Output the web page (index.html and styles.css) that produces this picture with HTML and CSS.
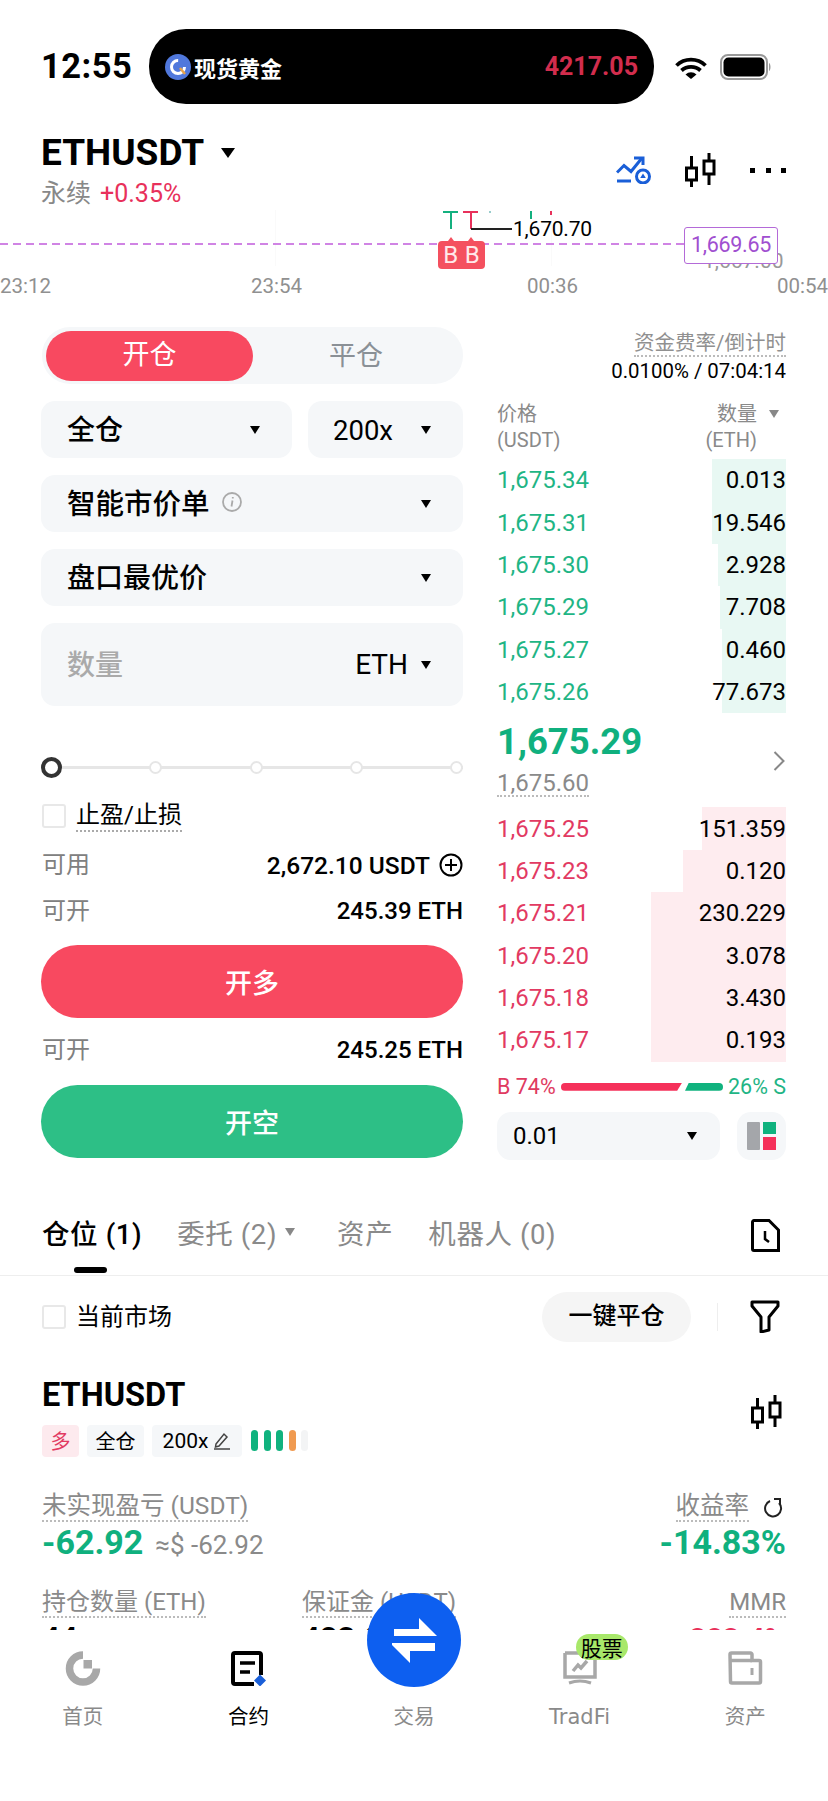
FILE: index.html
```html
<!DOCTYPE html>
<html lang="zh-CN">
<head>
  <meta charset="UTF-8">
  <meta name="viewport" content="width=device-width, initial-scale=1.0">
  <title>ETHUSDT</title>
  <link rel="stylesheet" href="styles.css">
</head>
<body>
  <div class="app">
    <div class="content">
      <!-- status bar -->
      <div class="status">
        <span class="time">12:55</span>
        <div class="island">
          <svg class="island-logo" width="26" height="28" viewBox="0 0 26 28"><circle cx="13" cy="14" r="13" fill="#5078dc"/><circle cx="13" cy="14" r="6.500" fill="none" stroke="#fff" stroke-width="3" stroke-dasharray="30 11"/><path d="M15 15l5 6" stroke="#e8a34a" stroke-width="2.500"/></svg>
          <span class="island-name">现货黄金</span>
          <span class="island-price">4217.05</span>
        </div>
        <svg class="wifi" width="32" height="22" viewBox="0 0 32 22"><path d="M1.500 8.500a21 21 0 0 1 29 0M6.500 13.500a14 14 0 0 1 19 0" fill="none" stroke="#000" stroke-width="3.800"/><path d="M10.500 17.500a8 8 0 0 1 11 0l-5.500 4.500z" fill="#000"/></svg>
        <svg class="battery" width="51" height="26" viewBox="0 0 51 26"><rect x="1" y="1" width="46" height="24" rx="7" fill="#fff" stroke="#999" stroke-width="2"/><rect x="3.500" y="3.500" width="41" height="19" rx="5" fill="#000"/><path d="M49 9c2 1 2 7 0 8z" fill="#999"/></svg>
      </div>

      <!-- symbol header -->
      <div class="header">
        <div>
          <div class="symbol"><span>ETHUSDT</span><i class="caret caret-lg"></i></div>
          <div class="sub"><span class="perp">永续</span><span class="change">+0.35%</span></div>
        </div>
        <div class="header-icons">
          <svg width="36" height="28" viewBox="0 0 36 28" fill="none" stroke="#1a5fd8" stroke-width="3"><path d="M1 16.500l7-7 7 6 11-13.500"/><path d="M18 2h9v7"/><path d="M1 25h14"/><circle cx="27" cy="20.500" r="6.500"/><path d="M27 17.500l2.800 4.500h-5.600z" fill="#1a5fd8" stroke="none"/></svg>
          <svg class="candle-icon" width="31" height="34" viewBox="0 0 31 34" fill="none" stroke="#000" stroke-width="3"><rect x="1.500" y="15" width="10" height="12"/><path d="M6.500 3v12M6.500 27v7"/><rect x="19" y="8" width="10" height="13"/><path d="M24 0v8M24 21v11"/></svg>
          <div class="more"><i></i><i></i><i></i></div>
        </div>
      </div>

      <!-- chart strip -->
      <div class="chart">
        <i class="grid-line grid-a"></i>
        <i class="grid-line grid-b"></i>
        <i class="wick wick-green"></i>
        <i class="wick wick-red"></i>
        <i class="tick tick-a"></i>
        <i class="tick tick-b"></i>
        <i class="tick tick-c"></i>
        <i class="leader"></i>
        <span class="peak">1,670.70</span>
        <i class="last-line"></i>
        <div class="marks"><span>B</span><span>B</span></div>
        <span class="ghost-price">1,667.00</span>
        <span class="last-tag">1,669.65</span>
        <span class="axis axis-a">23:12</span>
        <span class="axis axis-b">23:54</span>
        <span class="axis axis-c">00:36</span>
        <span class="axis axis-d">00:54</span>
      </div>

      <!-- order form and book -->
      <div class="trade">
        <div class="form">
          <div class="segment">
            <span class="segment-on">开仓</span>
            <span class="segment-off">平仓</span>
          </div>
          <div class="field-row">
            <div class="field field-mode"><span>全仓</span><i class="caret"></i></div>
            <div class="field field-lev"><span>200x</span><i class="caret"></i></div>
          </div>
          <div class="field">
            <span class="with-info">智能市价单
              <svg width="20" height="20" viewBox="0 0 20 20" fill="none" stroke="#aaa" stroke-width="1.800"><circle cx="10" cy="10" r="9"/><path d="M10.500 8.500l-1 6M10.800 5v1.500"/></svg>
            </span>
            <i class="caret"></i>
          </div>
          <div class="field"><span>盘口最优价</span><i class="caret"></i></div>
          <div class="field field-qty">
            <span class="placeholder">数量</span>
            <span class="unit">ETH<i class="caret"></i></span>
          </div>

          <div class="slider">
            <i class="slider-handle"></i>
            <i class="slider-dot"></i>
            <i class="slider-dot"></i>
            <i class="slider-dot"></i>
            <i class="slider-dot"></i>
          </div>

          <div class="tpsl"><i class="checkbox"></i><span class="dotted">止盈/止损</span></div>

          <div class="info info-avail">
            <span class="info-label">可用</span>
            <span class="info-value">2,672.10 USDT
              <svg width="24" height="24" viewBox="0 0 24 24" fill="none" stroke="#000" stroke-width="2"><circle cx="12" cy="12" r="10.500"/><path d="M6 12h12M12 6v12"/></svg>
            </span>
          </div>
          <div class="info info-open">
            <span class="info-label">可开</span>
            <span class="info-value">245.39 ETH</span>
          </div>
          <div class="btn btn-long">开多</div>
          <div class="info info-open-short">
            <span class="info-label">可开</span>
            <span class="info-value">245.25 ETH</span>
          </div>
          <div class="btn btn-short">开空</div>
        </div>

        <div class="book">
          <div class="funding">
            <span class="funding-label dotted-gray">资金费率/倒计时</span>
            <span class="funding-value">0.0100% / 07:04:14</span>
          </div>
          <div class="book-head">
            <div><div>价格</div><div class="book-unit">(USDT)</div></div>
            <div class="book-head-right"><div>数量<i class="caret caret-gray"></i></div><div class="book-unit">(ETH)</div></div>
          </div>

          <div class="rows">
            <div class="row bid"><i class="depth" style="width:74px"></i><span class="price">1,675.34</span><span class="qty">0.013</span></div>
            <div class="row bid"><i class="depth" style="width:74px"></i><span class="price">1,675.31</span><span class="qty">19.546</span></div>
            <div class="row bid"><i class="depth" style="width:68px"></i><span class="price">1,675.30</span><span class="qty">2.928</span></div>
            <div class="row bid"><i class="depth" style="width:66px"></i><span class="price">1,675.29</span><span class="qty">7.708</span></div>
            <div class="row bid"><i class="depth" style="width:64px"></i><span class="price">1,675.27</span><span class="qty">0.460</span></div>
            <div class="row bid"><i class="depth" style="width:64px"></i><span class="price">1,675.26</span><span class="qty">77.673</span></div>
          </div>

          <div class="mid">
            <div>
              <div class="mid-price">1,675.29</div>
              <span class="mid-mark dotted-gray">1,675.60</span>
            </div>
            <svg class="chevron" width="12" height="22" viewBox="0 0 12 22" fill="none" stroke="#888" stroke-width="2"><path d="M1.500 2l9 9-9 9"/></svg>
          </div>

          <div class="rows">
            <div class="row ask"><i class="depth" style="width:84px"></i><span class="price">1,675.25</span><span class="qty">151.359</span></div>
            <div class="row ask"><i class="depth" style="width:103px"></i><span class="price">1,675.23</span><span class="qty">0.120</span></div>
            <div class="row ask"><i class="depth" style="width:135px"></i><span class="price">1,675.21</span><span class="qty">230.229</span></div>
            <div class="row ask"><i class="depth" style="width:135px"></i><span class="price">1,675.20</span><span class="qty">3.078</span></div>
            <div class="row ask"><i class="depth" style="width:135px"></i><span class="price">1,675.18</span><span class="qty">3.430</span></div>
            <div class="row ask"><i class="depth" style="width:135px"></i><span class="price">1,675.17</span><span class="qty">0.193</span></div>
          </div>

          <div class="ratio">
            <span class="ratio-b">B 74%</span>
            <i class="ratio-red"></i>
            <i class="ratio-green"></i>
            <span class="ratio-s">26% S</span>
          </div>

          <div class="book-foot">
            <div class="step"><span>0.01</span><i class="caret"></i></div>
            <div class="layout-btn">
              <i class="lay-gray"></i>
              <div class="lay-stack"><i class="lay-green"></i><i class="lay-red"></i></div>
            </div>
          </div>
        </div>
      </div>

      <!-- positions -->
      <div class="tabs">
        <span class="tab tab-on">仓位 (1)</span>
        <span class="tab tab-orders">委托 (2)<i class="caret caret-gray"></i></span>
        <span class="tab tab-assets">资产</span>
        <span class="tab">机器人 (0)</span>
        <svg class="tabs-icon" width="29" height="33" viewBox="0 0 29 33" fill="none" stroke="#000" stroke-width="3"><path d="M3 1.500h15l9.500 9.500v20.500h-24.500a1.500 1.500 0 0 1-1.500-1.500v-27a1.500 1.500 0 0 1 1.500-1.500z"/><path d="M14 12v8l4 3" stroke-width="2.500"/></svg>
      </div>

      <div class="filter">
        <i class="checkbox"></i>
        <span class="filter-label">当前市场</span>
        <span class="close-all">一键平仓</span>
        <i class="filter-sep"></i>
        <svg width="30" height="33" viewBox="0 0 30 33" fill="none" stroke="#000" stroke-width="3"><path d="M2 2h26v4l-9 11v13l-8 2v-15l-9-11z" stroke-linejoin="round"/></svg>
      </div>

      <div class="pos-head">
        <div>
          <div class="pos-symbol">ETHUSDT</div>
          <div class="tags">
            <span class="tag tag-long">多</span>
            <span class="tag tag-mode">全仓</span>
            <span class="tag tag-lev">200x
              <svg width="18" height="18" viewBox="0 0 18 18" fill="none" stroke="#444" stroke-width="1.500"><path d="M3 12l8-10 3 3-8 9-3.500 1zM1 17h16"/></svg>
            </span>
            <div class="adl"><i class="adl-on"></i><i class="adl-on"></i><i class="adl-on"></i><i class="adl-warn"></i><i class="adl-off"></i></div>
          </div>
        </div>
        <svg class="pos-candle" width="31" height="34" viewBox="0 0 31 34" fill="none" stroke="#000" stroke-width="3"><rect x="1.500" y="13" width="10" height="14"/><path d="M6.500 3v10M6.500 27v7"/><rect x="19" y="8" width="10" height="14"/><path d="M24 0v8M24 22v10"/></svg>
      </div>

      <div class="pnl-labels">
        <span class="metric-label dotted-gray">未实现盈亏 (USDT)</span>
        <span class="roe-label">
          <span class="metric-label dotted-gray">收益率</span>
          <svg width="20" height="22" viewBox="0 0 20 22" fill="none" stroke="#222" stroke-width="2"><path d="M7 5a8 8 0 1 0 9 2"/><path d="M11 3h6v6"/></svg>
        </span>
      </div>
      <div class="pnl-values">
        <span class="pnl-main">-62.92<span class="pnl-usd">≈$ -62.92</span></span>
        <span class="pnl-main">-14.83%</span>
      </div>
      <div class="metrics">
        <span class="metric-label dotted-gray metric-a">持仓数量 (ETH)</span>
        <span class="metric-label dotted-gray metric-b">保证金 (USDT)</span>
        <span class="metric-label dotted-gray metric-c">MMR</span>
        <span class="metric-value">44</span>
        <span class="metric-value">423.98</span>
        <span class="metric-value metric-mmr">383.4%</span>
      </div>
    </div>

    <!-- tab bar -->
    <div class="nav">
      <div class="swap">
        <svg width="46" height="46" viewBox="0 0 46 46" fill="#fff"><path d="M3 12h25V1l18 18H3z"/><path d="M1 26h43v8H19v12L1 28z"/></svg>
      </div>
      <div class="nav-item">
        <svg width="36" height="35" viewBox="0 0 36 35"><path d="M18 4a13.500 13.500 0 1 0 13.500 13.500" fill="none" stroke="#a8a8a8" stroke-width="7.500"/><rect x="18.500" y="9" width="8.500" height="8.500" fill="#a8a8a8"/></svg>
        <span>首页</span>
      </div>
      <div class="nav-item nav-on">
        <svg width="36" height="35" viewBox="0 0 36 35"><path d="M31 24V4a2 2 0 0 0-2-2H5a2 2 0 0 0-2 2v27a2 2 0 0 0 2 2h19" fill="none" stroke="#000" stroke-width="4"/><path d="M10 12h15M10 21h10" stroke="#000" stroke-width="3.500"/><path d="M30 23.500l6 6-6 6-6-6z" fill="#1a5fd8"/></svg>
        <span>合约</span>
      </div>
      <div class="nav-item nav-trade">
        <span>交易</span>
      </div>
      <div class="nav-item nav-tradfi">
        <span class="badge">股票</span>
        <svg width="36" height="35" viewBox="0 0 36 35" fill="none" stroke="#a8a8a8" stroke-width="3.500"><path d="M3 2v24h30v-24h-30"/><path d="M11 20l5-6 3 3 6-7" stroke-width="3.500"/><path d="M7 32q11-4 22 0" stroke-width="3"/></svg>
        <span>TradFi</span>
      </div>
      <div class="nav-item">
        <svg width="36" height="35" viewBox="0 0 36 35" fill="none" stroke="#a8a8a8" stroke-width="3.500"><path d="M3 3.500a1.500 1.500 0 0 1 1.500-1.500h19a1.500 1.500 0 0 1 1.500 1.500v6h7a1.500 1.500 0 0 1 1.500 1.500v19.500a1.500 1.500 0 0 1-1.500 1.500h-27a1.500 1.500 0 0 1-1.500-1.500z"/><path d="M3 9.500h22"/><path d="M25 17v7" stroke-width="3"/></svg>
        <span>资产</span>
      </div>
    </div>
  </div>
</body>
</html>
```

FILE: styles.css
```css
* {
  box-sizing: border-box;
}
html, body {
  margin: 0;
  padding: 0;
}
body {
  font-family: Roboto, "Noto Sans CJK SC", sans-serif;
  background: #fff;
  color: #000;
}
i {
  display: block;
  font-style: normal;
}
.app {
  width: 828px;
  height: 1801px;
  display: flex;
  flex-direction: column;
  overflow: hidden;
}
.content {
  height: 1630px;
  overflow: hidden;
}
.caret {
  width: 0;
  height: 0;
  border-left: 5.5px solid transparent;
  border-right: 5.5px solid transparent;
  border-top: 8px solid #000;
}
.caret-lg {
  border-left-width: 7.5px;
  border-right-width: 7.5px;
  border-top-width: 10px;
}
.caret-gray {
  border-top-color: #888;
}
.dotted {
  border-bottom: 2px dotted #aaa;
}
.dotted-gray {
  border-bottom: 2px dotted #bbb;
}

/* status bar */
.status {
  height: 130px;
  padding: 29px 0 0 41px;
  display: flex;
  align-items: flex-start;
}
.time {
  font-size: 34.5px;
  font-weight: 700;
  line-height: 75px;
  width: 108px;
  letter-spacing: 0.5px;
}
.island {
  width: 505px;
  height: 75px;
  background: #000;
  border-radius: 37px;
  display: flex;
  align-items: center;
  padding: 0 16px;
  color: #fff;
}
.island-logo {
  flex: none;
}
.island-name {
  font-size: 22px;
  font-weight: 700;
  margin-left: 3px;
}
.island-price {
  margin-left: auto;
  font-size: 25px;
  font-weight: 700;
  color: #d22d4d;
}
.wifi {
  margin: 28px 0 0 21px;
}
.battery {
  margin: 25px 0 0 13px;
}

/* symbol header */
.header {
  height: 80px;
  padding: 0 42px 0 41px;
  display: flex;
  justify-content: space-between;
}
.symbol {
  display: flex;
  align-items: center;
  gap: 17px;
  font-size: 37px;
  font-weight: 700;
  line-height: 46px;
}
.sub {
  display: flex;
  align-items: center;
  font-size: 25px;
  line-height: 32px;
  margin-top: 2px;
}
.perp {
  color: #888;
}
.change {
  color: #e8315b;
  margin-left: 9px;
}
.header-icons {
  display: flex;
  align-items: center;
  height: 76px;
  padding-top: 4px;
}
.candle-icon {
  margin-left: 33px;
}
.more {
  display: flex;
  gap: 10.5px;
  margin-left: 34px;
}
.more i {
  width: 5px;
  height: 5px;
  background: #000;
}

/* chart strip */
.chart {
  position: relative;
  height: 116px;
  overflow: hidden;
}
.grid-line {
  position: absolute;
  top: 0;
  width: 1px;
  height: 56px;
  background: #fafafa;
}
.grid-a { left: 275px; }
.grid-b { left: 551px; }
.wick {
  position: absolute;
  top: 1px;
  width: 2px;
  height: 18px;
}
.wick::before {
  content: "";
  position: absolute;
  top: 0;
  width: 15px;
  height: 2px;
  background: inherit;
}
.wick-green {
  left: 450px;
  background: #14b07f;
}
.wick-green::before {
  left: -7px;
}
.wick-red {
  left: 470px;
  background: #e8315b;
}
.wick-red::before {
  left: -7px;
}
.tick {
  position: absolute;
  top: 1px;
  width: 2px;
  height: 8px;
}
.tick-a {
  left: 530px;
  background: #14b07f;
}
.tick-b {
  left: 550px;
  height: 4px;
  background: #e8315b;
}
.tick-c {
  left: 489px;
  height: 2px;
  background: #9cc;
}
.leader {
  position: absolute;
  left: 471px;
  top: 18px;
  width: 41px;
  height: 2px;
  background: #222;
}
.peak {
  position: absolute;
  left: 513px;
  top: 7px;
  font-size: 21px;
  line-height: 24px;
  letter-spacing: -0.2px;
}
.last-line {
  position: absolute;
  left: 0;
  right: 50px;
  top: 33px;
  height: 1.5px;
  background: repeating-linear-gradient(90deg, #d084e4 0 8px, transparent 8px 13px);
}
.marks {
  position: absolute;
  left: 438px;
  top: 31px;
  width: 47px;
  height: 28px;
  background: #f4505f;
  border-radius: 4px;
  display: flex;
  justify-content: space-around;
  align-items: center;
  padding: 0 2px;
  color: #ffe9ea;
  font-size: 24px;
  line-height: 28px;
}
.marks::before,
.marks::after {
  content: "";
  position: absolute;
  top: -4px;
  border-left: 3px solid transparent;
  border-right: 3px solid transparent;
  border-bottom: 4px solid #f4505f;
}
.marks::before {
  left: 10px;
}
.marks::after {
  left: 30px;
}
.ghost-price {
  position: absolute;
  left: 703px;
  top: 39px;
  font-size: 21px;
  line-height: 24px;
  color: #999;
}
.last-tag {
  position: absolute;
  left: 684px;
  top: 17px;
  width: 94px;
  height: 37px;
  border: 1.5px solid #b46ad8;
  border-radius: 3px;
  background: #fff;
  color: #a04fd0;
  font-size: 21.5px;
  line-height: 34px;
  text-align: center;
  letter-spacing: -0.3px;
}
.axis {
  position: absolute;
  top: 63px;
  font-size: 20.5px;
  line-height: 26px;
  color: #909090;
}
.axis-a { left: 0; }
.axis-b { left: 251px; }
.axis-c { left: 527px; }
.axis-d { right: 0; }

/* order form and book */
.trade {
  display: flex;
  gap: 34px;
  padding: 1px 42px 0 41px;
}
.form {
  width: 422px;
  flex: none;
}
.segment {
  height: 57px;
  margin-left: 1px;
  background: #f5f7f9;
  border-radius: 28px;
  padding: 3px 4px;
  display: flex;
  align-items: center;
  font-size: 27px;
}
.segment-on {
  width: 207px;
  height: 50px;
  border-radius: 25px;
  background: #f84960;
  color: #fff;
  text-align: center;
  line-height: 48px;
}
.segment-off {
  flex: 1;
  text-align: center;
  line-height: 48px;
  color: #8a9096;
}
.field-row {
  display: flex;
  gap: 16px;
}
.field {
  height: 57px;
  margin-top: 17px;
  background: #f5f7f9;
  border-radius: 14px;
  padding: 0 32px 0 26px;
  display: flex;
  align-items: center;
  justify-content: space-between;
  font-size: 28px;
  font-weight: 500;
}
.field > span {
  margin-bottom: 4px;
}
.field-mode {
  width: 251px;
}
.field-lev {
  flex: 1;
  padding-left: 25px;
  font-size: 27.5px;
}
.field-lev span,
.unit {
  font-weight: 400;
}
.field-lev > span {
  margin: 2px 0 0;
}
.with-info {
  display: flex;
  align-items: center;
  gap: 12px;
  font-size: 28.5px;
}
.field-qty {
  height: 83px;
}
.placeholder {
  color: #aaa;
}
.field > .unit {
  margin: 0;
  display: flex;
  align-items: center;
  gap: 13px;
  font-size: 28px;
}
.slider {
  height: 21px;
  margin-top: 51px;
  display: flex;
  align-items: center;
  justify-content: space-between;
  background: linear-gradient(#e6e6e6, #e6e6e6) center / 100% 3px no-repeat;
}
.slider-handle {
  width: 21px;
  height: 21px;
  border: 4px solid #333;
  border-radius: 50%;
  background: #fff;
}
.slider-dot {
  width: 13px;
  height: 13px;
  border: 2px solid #e6e6e6;
  border-radius: 50%;
  background: #fff;
}
.checkbox {
  width: 24px;
  height: 24px;
  flex: none;
  border: 2px solid #e8e8e8;
  border-radius: 3px;
}
.tpsl {
  height: 30px;
  margin-top: 23px;
  display: flex;
  align-items: center;
  gap: 10px;
  font-size: 24px;
  padding-left: 1px;
}
.tpsl .dotted {
  line-height: 30px;
}
.info {
  height: 30px;
  display: flex;
  align-items: center;
  justify-content: space-between;
  font-size: 24.5px;
}
.info-avail {
  margin-top: 19px;
}
.info-open {
  margin-top: 16px;
  font-size: 24px;
}
.info-open-short {
  margin-top: 17px;
  font-size: 24px;
}
.info-label {
  color: #808080;
  padding-left: 1px;
  font-size: 24px;
  margin-bottom: 5px;
}
.info-value {
  display: flex;
  align-items: center;
  gap: 9px;
  font-weight: 500;
}
.btn {
  height: 73px;
  border-radius: 37px;
  color: #fff;
  font-size: 27px;
  font-weight: 500;
  line-height: 79px;
  text-align: center;
}
.btn-long {
  margin-top: 19px;
  background: #f84960;
}
.btn-short {
  margin-top: 20px;
  background: #2dbf86;
}
.book {
  flex: 1;
}
.funding {
  display: flex;
  flex-direction: column;
  align-items: flex-end;
  padding-top: 5px;
}
.funding-label {
  font-size: 20.5px;
  line-height: 23px;
  color: #909090;
}
.funding-value {
  font-size: 20.4px;
  line-height: 26px;
  margin-top: 1px;
}
.book-head {
  margin-top: 17px;
  height: 58px;
  display: flex;
  justify-content: space-between;
  font-size: 20px;
  line-height: 26px;
  color: #8a8a8a;
}
.book-head-right {
  text-align: right;
  padding-right: 29px;
  position: relative;
}
.book-head-right .caret {
  position: absolute;
  right: 7px;
  top: 9px;
}
.book-unit {
  font-size: 20px;
}
.row {
  position: relative;
  height: 42.4px;
  display: flex;
  align-items: center;
  justify-content: space-between;
  font-size: 24px;
}
.depth {
  position: absolute;
  right: 0;
  top: 0;
  bottom: 0;
}
.price,
.qty {
  position: relative;
}
.bid .depth {
  background: #e8f8f3;
}
.ask .depth {
  background: #feecef;
}
.bid .price {
  color: #1fb585;
}
.ask .price {
  color: #e23a62;
}
.mid {
  height: 94px;
  padding-top: 10px;
  display: flex;
  justify-content: space-between;
  align-items: flex-start;
}
.mid-price {
  font-size: 36.5px;
  font-weight: 700;
  line-height: 38px;
  color: #10b07e;
}
.mid-mark {
  display: inline-block;
  margin-top: 10px;
  font-size: 24px;
  line-height: 24px;
  color: #8a8a8a;
}
.chevron {
  margin: 27px 1px 0 0;
}
.ratio {
  height: 26px;
  margin-top: 12px;
  display: flex;
  align-items: center;
  font-size: 21.5px;
}
.ratio-b {
  width: 64px;
  color: #e03a60;
}
.ratio-red {
  width: 121px;
  height: 8px;
  background: #f5305a;
  border-radius: 4px 0 0 4px;
  clip-path: polygon(0 0, 100% 0, 96% 100%, 0 100%);
}
.ratio-green {
  width: 38px;
  height: 8px;
  margin-left: 3px;
  background: #10b27e;
  border-radius: 0 4px 4px 0;
  clip-path: polygon(10% 0, 100% 0, 100% 100%, 0 100%);
}
.ratio-s {
  margin-left: auto;
  color: #1fb585;
}
.book-foot {
  height: 48px;
  margin-top: 12px;
  display: flex;
  gap: 17px;
}
.step {
  flex: 1;
  background: #f5f7f9;
  border-radius: 14px;
  display: flex;
  align-items: center;
  justify-content: space-between;
  padding: 0 23px 0 16px;
  font-size: 24px;
}
.layout-btn {
  width: 49px;
  background: #f5f7f9;
  border-radius: 14px;
  padding: 10px 10px;
  display: flex;
  gap: 3px;
}
.lay-gray {
  width: 13px;
  background: #a4a6aa;
  border-radius: 1px;
}
.lay-stack {
  flex: 1;
  display: flex;
  flex-direction: column;
  gap: 3px;
}
.lay-green {
  flex: 1;
  background: #10b27e;
}
.lay-red {
  flex: 1;
  background: #f5305a;
}

/* positions */
.tabs {
  height: 116px;
  padding: 47px 48px 0 42px;
  display: flex;
  align-items: flex-start;
  border-bottom: 1px solid #eee;
}
.tab {
  position: relative;
  display: flex;
  align-items: center;
  height: 50px;
  font-size: 27.5px;
  letter-spacing: 0.6px;
  color: #8a8a8a;
  margin-right: 35px;
}
.tab-on {
  color: #000;
  font-weight: 500;
}
.tab-on::after {
  content: "";
  position: absolute;
  left: 32px;
  top: 60px;
  width: 33px;
  height: 6px;
  border-radius: 3px;
  background: #000;
}
.tab-orders {
  gap: 8px;
  margin-right: 42px;
}
.tabs-icon {
  margin: 12px 0 0 auto;
}
.filter {
  height: 82px;
  padding: 0 48px 0 42px;
  display: flex;
  align-items: center;
}
.filter-label {
  margin: 0 0 4px 10px;
  font-size: 24px;
}
.close-all {
  margin-left: auto;
  width: 149px;
  height: 50px;
  border-radius: 25px;
  background: #f5f5f5;
  text-align: center;
  line-height: 48px;
  font-size: 24px;
  font-weight: 500;
}
.filter-sep {
  width: 1px;
  height: 28px;
  margin: 0 32px 0 26px;
  background: #eee;
}
.pos-head {
  margin-top: 22px;
  padding: 0 46px 0 42px;
  display: flex;
  justify-content: space-between;
}
.pos-symbol {
  font-size: 32.5px;
  font-weight: 700;
  line-height: 30px;
}
.tags {
  margin-top: 15px;
  display: flex;
  gap: 8px;
  font-size: 20px;
}
.tag {
  height: 32px;
  border-radius: 4px;
  background: #f5f7f9;
  display: flex;
  align-items: center;
  justify-content: center;
  gap: 5px;
}
.tag-long {
  width: 37px;
  background: #fdeaee;
  color: #e23a62;
}
.tag-mode {
  width: 57px;
}
.tag-lev {
  width: 90px;
  font-size: 21px;
}
.adl {
  display: flex;
  align-items: center;
  gap: 5.5px;
  margin-left: 1px;
}
.adl i {
  width: 7px;
  height: 21px;
  border-radius: 4px;
}
.adl-on {
  background: #10b27e;
}
.adl-warn {
  background: #f09a50;
}
.adl-off {
  background: #f3f4f5;
}
.pos-candle {
  margin-top: 15px;
}
.pnl-labels {
  margin-top: 36px;
  padding: 0 42px;
  display: flex;
  justify-content: space-between;
  align-items: flex-start;
}
.metric-label {
  display: inline-block;
  height: 29px;
  font-size: 24.5px;
  line-height: 26px;
  color: #8a8a8a;
}
.roe-label {
  display: flex;
  align-items: center;
  gap: 14px;
  padding-right: 3px;
}
.pnl-values {
  height: 36px;
  margin-top: 2px;
  padding: 0 42px;
  display: flex;
  justify-content: space-between;
  align-items: center;
}
.pnl-main {
  font-size: 34px;
  font-weight: 700;
  color: #10b07e;
}
.pnl-usd {
  margin-left: 12px;
  font-size: 26px;
  font-weight: 400;
  color: #8a8a8a;
}
.metrics {
  margin-top: 29px;
  padding: 0 42px;
  display: grid;
  grid-template-columns: 260px 1fr auto;
}
.metrics .metric-label {
  font-size: 24px;
}
.metric-a {
  justify-self: start;
}
.metric-b {
  justify-self: start;
}
.metric-c {
  justify-self: end;
}
.metric-value {
  font-size: 31px;
  font-weight: 700;
  line-height: 36px;
  margin-top: 3px;
}
.metric-mmr {
  color: #e8315b;
  text-align: right;
  font-size: 29px;
}

/* tab bar */
.nav {
  position: relative;
  height: 171px;
  padding-top: 21px;
  background: #fff;
  display: flex;
}
.nav-item {
  position: relative;
  flex: 1;
  display: flex;
  flex-direction: column;
  align-items: center;
  font-size: 20.5px;
  line-height: 24px;
  color: #8a8a8a;
}
.nav-item span {
  margin-top: 19px;
}
.nav-on {
  color: #000;
}
.nav-trade {
  padding-top: 35px;
}
.nav-tradfi {
  font-family: "DejaVu Sans", Roboto, sans-serif;
  font-size: 21px;
}
.nav-tradfi .badge {
  position: absolute;
  left: 79px;
  top: -17px;
  margin: 0;
  width: 52px;
  height: 26px;
  border-radius: 13px;
  background: #a8e86a;
  color: #000;
  font-family: "Noto Sans CJK SC", sans-serif;
  font-size: 21px;
  line-height: 26px;
  text-align: center;
}
.swap {
  position: absolute;
  left: 367px;
  top: -37px;
  width: 94px;
  height: 94px;
  border-radius: 50%;
  background: #0d5ff0;
  display: flex;
  align-items: center;
  justify-content: center;
  z-index: 1;
}
```
